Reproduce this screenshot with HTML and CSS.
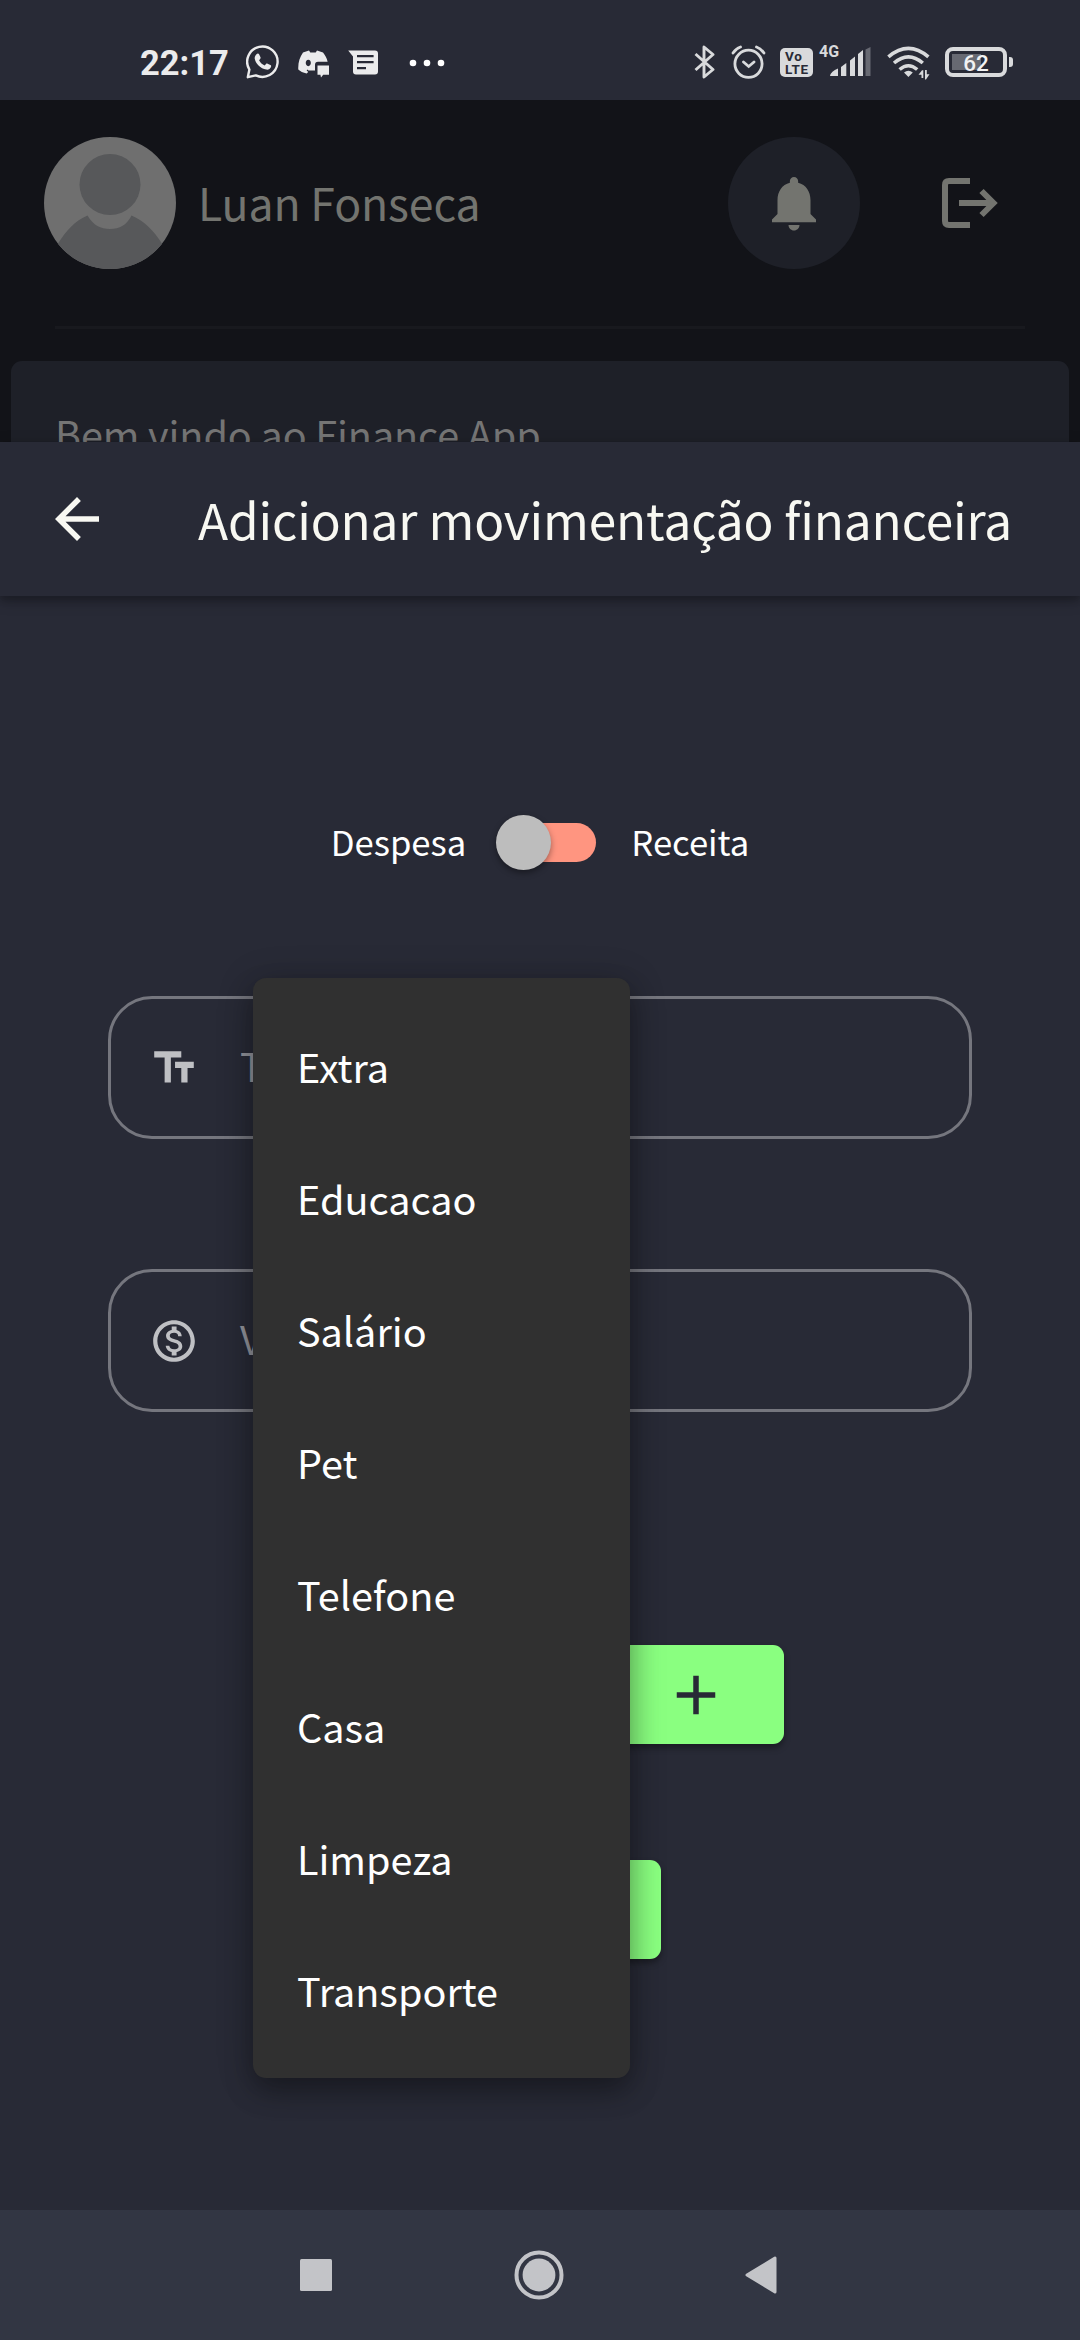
FILE: index.html
```html
<!DOCTYPE html>
<html lang="pt-BR">
<head>
  <meta charset="utf-8">
  <title>Finance App</title>
  <link rel="stylesheet" href="styles.css">
</head>
<body>
<div class="screen">
  <header class="status">
    <div class="status-left">
      <span class="clock">22:17</span>
      <svg class="ic-whatsapp" width="34" height="34" viewBox="0 0 34 34">
        <path d="M1.800 32.200 3.400 24.600A15.200 15.200 0 1 1 9.800 30.400Z" fill="none" stroke="currentColor" stroke-width="2.400" stroke-linejoin="round"/>
        <path d="M10.500 9.200c1-1 2.200-.8 2.700.2l1.300 2.800c.3.7.1 1.200-.4 1.800l-1 1.200c1.300 2.600 3.100 4.200 5.600 5.300l1.300-1.500c.5-.6 1-.6 1.600-.3l2.800 1.400c.8.4.9 1.100.6 2-.7 1.900-2.900 2.900-4.700 2.500-6-1.300-10.200-5.300-11.500-10.600-.4-1.900.4-3.600 1.700-4.800Z" fill="currentColor"/>
      </svg>
      <svg class="ic-discord" width="32" height="28" viewBox="0 0 32 28">
        <path fill="currentColor" fill-rule="evenodd" d="M5 2.600 11 .5l1.300 2h5.400L19 .5l6 2.100c2.300 2.900 4 6 4.600 9.200H20q-3 0-3 3V20.500H10.500L9.300 19.600l-.6.8 1.500 1.500-1.500 1.600C5 23 2.300 21.500.3 19.600-.1 13 1.600 7.500 5 2.600ZM10.300 9.800c-3.400.3-3.400 6 0 6.400 3.400-.4 3.400-6.100 0-6.400Z"/>
        <path fill="currentColor" d="M19.500 15.500h11.500v9.300h-5.800l-2.200 2.700-.6-2.700h-2.900Z"/>
      </svg>
      <svg class="ic-message" width="30" height="25" viewBox="0 0 30 25">
        <path fill="currentColor" fill-rule="evenodd" d="M.2.500H27q3 0 3 3V21.500q0 3-3 3H8q-3 0-3-3V6.500ZM9 5v2.200h16.600V5Zm0 6v2.200h16.600V11Zm0 6v2.200h9V17Z"/>
      </svg>
      <svg class="ic-dots" width="36" height="8" viewBox="0 0 36 8"><g fill="#fff"><circle cx="4" cy="4" r="3.300"/><circle cx="18" cy="4" r="3.300"/><circle cx="32" cy="4" r="3.300"/></g></svg>
    </div>
    <div class="status-right">
      <svg class="ic-bt" width="22" height="34" viewBox="0 0 22 34"><path d="m1.500 9 17.500 15.500L10 32V2l9 7.500L1.500 25" fill="none" stroke="currentColor" stroke-width="2.900" stroke-linejoin="round"/></svg>
      <svg class="ic-alarm" width="35" height="34" viewBox="0 0 35 34"><g fill="none" stroke="currentColor" stroke-width="2.800" stroke-linecap="round"><circle cx="17.500" cy="18.800" r="13.600"/><path d="m12.500 17 5.200 4.500 5.300-4.500M2 8q3-4.500 7.500-6M33 8q-3-4.500-7.500-6"/></g></svg>
      <div class="volte"><span>Vo</span><span>LTE</span></div>
      <div class="cell">
        <span class="net">4G</span>
        <svg width="41" height="30" viewBox="0 0 41 30"><path fill="currentColor" d="M0 29q1-5 8-7.500V29ZM11 20l5.300-4v13H11Zm9-6.500 5-4V29h-5Zm8-6.500 5-4v26h-5Z"/><path fill="#676972" d="m35.500 2.500 5-2.500v29h-5Z"/></svg>
      </div>
      <svg class="ic-wifi" width="43" height="34" viewBox="0 0 43 34"><g fill="none" stroke="currentColor" stroke-width="3.600"><path d="M1.400 10.800q20-17 40 0M7 17q14.400-12.400 28.800 0M12.600 23.500q8.800-7.500 17.600 0"/></g><path fill="currentColor" d="M17 26.500q4.400-3.600 8.800 0L21.400 31ZM31.500 28.800l3.500-4.500h1.300V32h-1.800v-3.200ZM38 24h1.800v4.300h2.700L39 33.500h-1Z"/></svg>
      <div class="battery"><span>62</span></div>
    </div>
  </header>

  <section class="home">
    <div class="profile">
      <svg class="avatar" width="132" height="132" viewBox="0 0 132 132">
        <defs><clipPath id="disc"><circle cx="66" cy="66" r="66"/></clipPath></defs>
        <g clip-path="url(#disc)"><path fill="#6f6f6f" d="M0 0h132v132H0z"/><g fill="#57585a"><circle cx="66" cy="47.500" r="30.500"/><path d="M14 106.500C22 94 31 83.500 43.500 78.500c6 10 13 13.500 22.500 13.500s17-4 21.500-13.500C100 83.500 110 94 118 106.500V132H14Z"/></g></g>
      </svg>
      <span class="name">Luan Fonseca</span>
      <span class="bell">
        <svg width="66" height="66" viewBox="0 0 24 24"><path fill="currentColor" d="M12 22c1.100 0 2-.9 2-2h-4c0 1.100.9 2 2 2zm6-6v-5c0-3.070-1.640-5.640-4.500-6.320V4c0-.83-.67-1.500-1.500-1.500s-1.500.67-1.500 1.500v.68C7.630 5.360 6 7.920 6 11v5l-2 2v1h16v-1l-2-2z"/></svg>
      </span>
      <svg class="exit" width="56" height="50" viewBox="0 0 56 50"><g fill="none" stroke="currentColor" stroke-width="6"><path d="M28 3H7Q3 3 3 7V43q0 4 4 4H28M17 25H51"/><path d="M39.500 13 51.500 25 39.500 37"/></g></svg>
    </div>
    <div class="divider"></div>
    <div class="welcome">Bem vindo ao Finance App</div>
  </section>

  <main class="sheet">
    <div class="appbar">
      <svg width="66" height="66" viewBox="0 0 24 24"><path fill="currentColor" d="M20 11H7.830l5.590-5.590L12 4l-8 8 8 8 1.410-1.410L7.830 13H20v-2z"/></svg>
      <h1>Adicionar movimentação financeira</h1>
    </div>
    <div class="form">
      <div class="toggle">
        <span>Despesa</span>
        <div class="switch"><div class="track"></div><div class="thumb"></div></div>
        <span>Receita</span>
      </div>
      <div class="field">
        <svg width="50" height="50" viewBox="0 0 24 24"><path fill="currentColor" d="M2.500 4v3h5v12h3V7h5V4h-13zm19 5h-9v3h3v7h3v-7h3V9z"/></svg>
        <span>Título</span>
      </div>
      <div class="field">
        <svg width="50" height="50" viewBox="0 0 24 24"><path fill="currentColor" d="M12 2C6.480 2 2 6.480 2 12s4.480 10 10 10 10-4.480 10-10S17.520 2 12 2zm0 18c-4.410 0-8-3.590-8-8s3.590-8 8-8 8 3.590 8 8-3.590 8-8 8zm.31-8.860c-1.770-.45-2.340-.94-2.340-1.670 0-.84.79-1.430 2.100-1.430 1.380 0 1.900.66 1.940 1.640h1.710c-.05-1.340-.87-2.570-2.490-2.970V5H10.900v1.690c-1.510.32-2.720 1.300-2.720 2.810 0 1.790 1.490 2.690 3.660 3.210 1.950.46 2.340 1.150 2.340 1.870 0 .53-.39 1.390-2.100 1.390-1.600 0-2.230-.72-2.320-1.640H8.040c.1 1.700 1.360 2.660 2.860 2.970V19h2.340v-1.670c1.520-.29 2.720-1.160 2.730-2.770-.01-2.200-1.900-2.960-3.660-3.420z"/></svg>
        <span>Valor</span>
      </div>
      <button class="btn add" type="button" aria-label="Adicionar categoria">
        <svg width="66" height="66" viewBox="0 0 24 24"><path fill="currentColor" d="M19 13h-6v6h-2v-6H5v-2h6V5h2v6h6v2z"/></svg>
      </button>
      <button class="btn save" type="button" aria-label="Salvar"></button>
    </div>
  </main>

  <nav class="navbar">
    <svg width="32" height="32" viewBox="0 0 32 32"><rect width="32" height="32" rx="1.500" fill="currentColor"/></svg>
    <svg width="50" height="50" viewBox="0 0 50 50"><circle cx="25" cy="25" r="22.500" fill="none" stroke="currentColor" stroke-width="4"/><circle cx="25" cy="25" r="16.400" fill="currentColor"/></svg>
    <svg width="32" height="38" viewBox="0 0 32 38"><path d="M2 19 30 2V36Z" fill="currentColor" stroke="currentColor" stroke-width="3" stroke-linejoin="round"/></svg>
  </nav>

  <ul class="menu">
    <li>Extra</li><li>Educacao</li><li>Salário</li><li>Pet</li><li>Telefone</li><li>Casa</li><li>Limpeza</li><li>Transporte</li>
  </ul>
</div>
</body>
</html>
```
FILE: styles.css
```css
* { box-sizing: border-box; }
body { margin: 0; background: #282a36; font-family: "Noto Sans CJK SC", "Noto Sans", sans-serif; }
svg { display: block; flex: none; }

.screen { position: relative; width: 1080px; height: 2340px; display: flex; flex-direction: column; overflow: hidden; }

/* Status bar */
.status { height: 100px; flex: none; display: flex; justify-content: space-between; padding: 0 67px 0 140px; font-family: Roboto, sans-serif; color: #ebebec; }
.status-left, .status-right { display: flex; align-items: center; height: 124px; }
.status-right { color: #d9dadc; }
.clock { width: 89px; font-size: 34.5px; font-weight: 700; line-height: 40px; padding-top: 2px; }
.ic-whatsapp { margin-left: 17px; }
.ic-discord { margin-left: 18px; margin-top: 3px; }
.ic-message { margin-left: 18px; }
.ic-dots { margin-left: 31px; margin-top: 2px; }
.ic-alarm { margin-left: 15px; }
.volte { width: 33px; height: 29px; margin-left: 14px; border-radius: 5px; background: #d9dadc; color: #282a36; font-size: 13.5px; letter-spacing: .7px; font-weight: 700; line-height: 13px; padding: 2px 0 0 5px; display: flex; flex-direction: column; }
.cell { margin-left: 6px; width: 52px; display: flex; position: relative; justify-content: flex-end; }
.net { position: absolute; left: 0; top: -3px; font-size: 16px; line-height: 16px; font-weight: 700; }
.ic-wifi { margin-left: 16px; margin-top: 2px; }
.battery { position: relative; width: 62px; height: 30px; margin: 0 6px 0 15px; border: 4px solid #d9dadc; border-radius: 8px; background: linear-gradient(#676972, #676972) 3px 3px / 29px 16px no-repeat; color: #f2f2f3; font-size: 22.5px; font-weight: 500; line-height: 25px; text-align: center; }
.battery::after { content: ""; position: absolute; right: -10px; top: 6px; width: 4px; height: 10px; border-radius: 0 3px 3px 0; background: #d9dadc; }

/* Dimmed home screen behind the sheet */
.home { height: 342px; flex: none; overflow: hidden; background: #121318; color: #73746f; }
.profile { height: 226px; padding: 37px 82px 0 44px; display: flex; align-items: flex-start; }
.name { margin-left: 22px; width: 530px; font-size: 44.55px; letter-spacing: -.12px; line-height: 129px; }
.bell { width: 132px; height: 132px; flex: none; border-radius: 50%; background: #1e2028; display: flex; align-items: center; justify-content: center; }
.exit { margin: 41px 0 0 82px; }
.divider { height: 3px; margin: 0 55px; background: #18191e; }
.welcome { height: 120px; margin: 32px 11px 0; padding-left: 44px; border-radius: 11px; background: #1e2028; font-size: 39.6px; letter-spacing: -.1px; line-height: 143px; color: #757575; }

/* Sheet */
.sheet { flex: 1; display: flex; flex-direction: column; background: #282a36; color: #fff; }
.appbar { height: 154px; flex: none; display: flex; align-items: center; gap: 88px; padding-left: 44px; color: #f8f8f2; background: #282a36; box-shadow: 0 4px 14px rgba(0, 0, 0, .28), 0 5px 6px rgba(0, 0, 0, .12); }
.appbar h1 { margin: 0; font-size: 49.5px; letter-spacing: -.12px; font-weight: 400; line-height: 70px; white-space: nowrap; }
.form { display: flex; flex-direction: column; align-items: center; padding-top: 180px; }
.toggle { height: 132px; display: flex; align-items: center; font-size: 34.65px; line-height: 50px; }
.toggle > span { margin-top: -3px; }
.switch { position: relative; width: 165px; height: 55px; display: flex; align-items: center; padding-left: 31px; }
.track { width: 99px; height: 39px; border-radius: 20px; background: #ff9580; }
.thumb { position: absolute; left: 30px; top: 0; width: 55px; height: 55px; border-radius: 50%; background: #bdbdbd; box-shadow: 0 3px 6px rgba(0, 0, 0, .38); }
.field { width: 864px; height: 143px; margin-top: 88px; display: flex; align-items: center; gap: 41px; padding-left: 38px; border: 3px solid #75767e; border-radius: 44px; color: #bfc0c4; font-size: 39.6px; line-height: 56px; }
.field + .field { margin-top: 130px; }
.field span { margin-top: -6px; color: #93949b; }
.btn { height: 99px; border: 0; padding: 0; border-radius: 11px; background: #8aff80; color: #282a36; display: flex; align-items: center; justify-content: center; box-shadow: 0 4px 6px rgba(0, 0, 0, .35); }
.add { width: 176px; margin: 233px 0 0 311px; }
.save { width: 242px; margin-top: 116px; }

/* Category popup */
.menu { position: absolute; left: 253px; top: 978px; width: 377px; margin: 0; padding: 22px 0; list-style: none; border-radius: 13px; background: #303030; color: #fff; font-size: 39.6px; box-shadow: 0 14px 28px rgba(0, 0, 0, .28), 0 4px 36px rgba(0, 0, 0, .22); }
.menu li { height: 132px; line-height: 132px; padding-left: 44px; }

/* System navigation */
.navbar { position: relative; height: 130px; flex: none; display: flex; align-items: center; justify-content: space-between; padding: 0 303px 0 300px; background: #323643; color: #c3c4c8; }
```
